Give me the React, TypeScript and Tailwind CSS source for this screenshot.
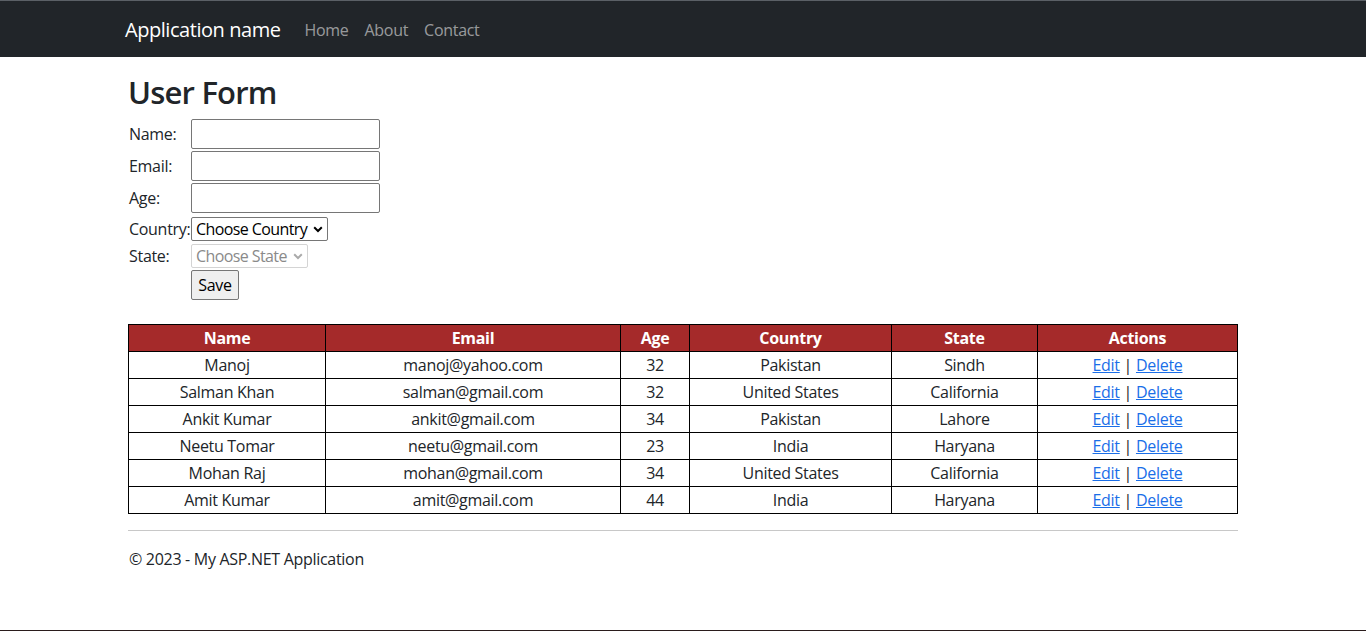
import React from "react";

const rows = [
  ["Manoj", "manoj@yahoo.com", "32", "Pakistan", "Sindh"],
  ["Salman Khan", "salman@gmail.com", "32", "United States", "California"],
  ["Ankit Kumar", "ankit@gmail.com", "34", "Pakistan", "Lahore"],
  ["Neetu Tomar", "neetu@gmail.com", "23", "India", "Haryana"],
  ["Mohan Raj", "mohan@gmail.com", "34", "United States", "California"],
  ["Amit Kumar", "amit@gmail.com", "44", "India", "Haryana"],
];

function Chevron({ color }: { color: string }) {
  return (
    <svg width="10" height="7" viewBox="0 0 10 7" className="shrink-0">
      <path d="M1.2 1.3 L5 5 L8.8 1.3" fill="none" stroke={color} strokeWidth="2" />
    </svg>
  );
}

export default function App() {
  const font = { fontFamily: '"Open Sans", sans-serif' };
  return (
    <div className="min-h-[631px] bg-white text-[#212529] text-[16px] tracking-[-0.3px] relative" style={font}>
      <div className="border-t border-[#5b6066] bg-[#212529] h-[57px]">
        <div className="w-[1140px] mx-auto px-[12px] flex items-center h-[56px] pt-[2px]">
          <span className="text-white text-[20px] tracking-[-0.45px] mr-[24px]">Application name</span>
          <nav className="flex gap-[16px] text-[rgba(255,255,255,0.55)]">
            <span>Home</span>
            <span>About</span>
            <span>Contact</span>
          </nav>
        </div>
      </div>

      <main className="w-[1140px] mx-auto px-[15px] pt-[16px]">
        <h2 className="text-[31px] font-semibold tracking-[-0.8px] leading-[38px] mb-[8px]">User Form</h2>
        <div className="grid grid-cols-[62px_auto] gap-y-[2px] items-center justify-start pl-[1px]">
          <span>Name:</span>
          <input className="w-[189px] h-[30px] border border-[#767676] rounded-[2px]" />
          <span>Email:</span>
          <input className="w-[189px] h-[30px] border border-[#767676] rounded-[2px]" />
          <span>Age:</span>
          <input className="w-[189px] h-[30px] border border-[#767676] rounded-[2px]" />
          <span className="mt-[2px]">Country:</span>
          <div className="mt-[2px] w-[137px] h-[24px] border border-[#767676] rounded-[2px] flex items-center justify-between pl-[4px] pr-[4px] text-black whitespace-nowrap tracking-[-0.6px]">
            <span className="leading-none">Choose Country</span>
            <Chevron color="#000" />
          </div>
          <span className="mt-[1px]">State:</span>
          <div className="mt-[1px] w-[117px] h-[24px] border border-[#d4d4d4] rounded-[2px] flex items-center justify-between pl-[4px] pr-[4px] text-[#8a8a8a] whitespace-nowrap tracking-[-0.6px]">
            <span className="leading-none">Choose State</span>
            <Chevron color="#aaa" />
          </div>
          <span></span>
          <button className="w-[48px] h-[30px] bg-[#efefef] border border-[#767676] rounded-[2px] text-black">Save</button>
        </div>

        <table className="mt-[24px] w-[1110px] border-collapse text-center">
          <thead>
            <tr className="bg-[#a52a2a] text-white font-bold">
              <th className="border border-black w-[197px] h-[27px] p-0">Name</th>
              <th className="border border-black w-[295px] p-0">Email</th>
              <th className="border border-black w-[69px] p-0">Age</th>
              <th className="border border-black w-[202px] p-0">Country</th>
              <th className="border border-black w-[146px] p-0">State</th>
              <th className="border border-black p-0">Actions</th>
            </tr>
          </thead>
          <tbody>
            {rows.map((r) => (
              <tr key={r[1]}>
                {r.map((c, i) => (
                  <td key={i} className="border border-black h-[27px] p-0">{c}</td>
                ))}
                <td className="border border-black p-0">
                  <span className="text-[#1a6ee8] underline">Edit</span> |{" "}
                  <span className="text-[#1a6ee8] underline">Delete</span>
                </td>
              </tr>
            ))}
          </tbody>
        </table>

        <hr className="mt-[16px] border-t border-[#c8c8c8]" />
        <footer className="pt-[16px] pl-[1px]">© 2023 - My ASP.NET Application</footer>
      </main>

      <div className="absolute bottom-0 left-0 right-0 h-[1px] bg-[#2a1c1c]" />
    </div>
  );
}
